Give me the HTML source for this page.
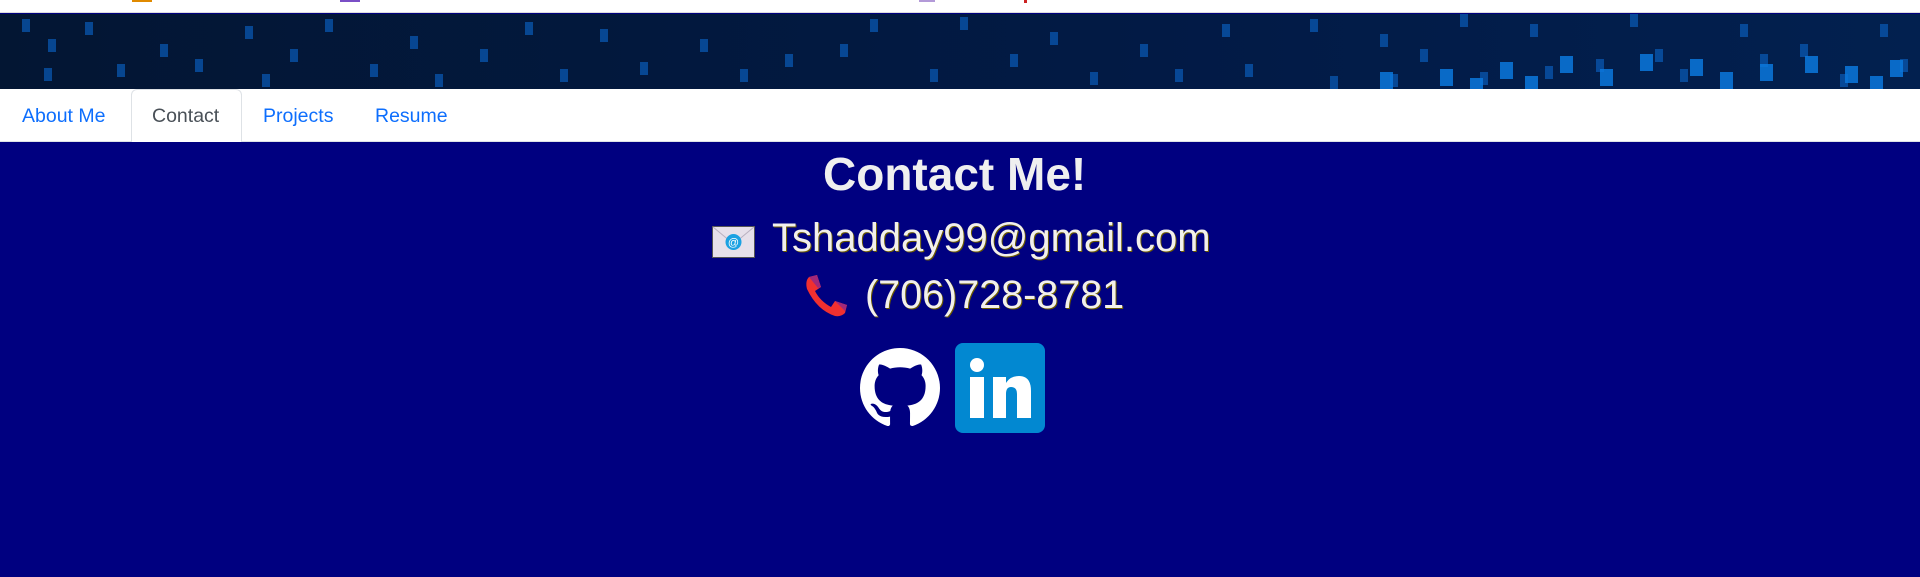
<!DOCTYPE html>
<html><head><meta charset="utf-8"><style>
*{margin:0;padding:0;box-sizing:border-box}
body{width:1920px;height:577px;overflow:hidden;background:#000080;font-family:"Liberation Sans",sans-serif;position:relative}
#top{position:absolute;left:0;top:0;width:1920px;height:13px;background:#fff;border-bottom:1px solid #ddd}
#banner{position:absolute;left:0;top:14px;width:1920px;height:75px;background:linear-gradient(90deg,#031633,#021a45 60%,#02204f);overflow:hidden}
#banner i{position:absolute;width:8px;height:13px;background:#0a5bb8;opacity:.7}
#banner i.b{background:#0b78dd;opacity:.85;width:13px;height:17px}
#nav{position:absolute;left:0;top:89px;width:1920px;height:53px;background:#fff;border-bottom:1px solid #dee2e6}
#nav a{position:absolute;top:16px;font-size:19.5px;color:#0d6efd;text-decoration:none}
#tab{position:absolute;left:131px;top:0;width:111px;height:53px;border:1px solid #dee2e6;border-bottom:none;border-radius:6px 6px 0 0;background:#fff}
.t{position:absolute;color:#f2f0ec;text-shadow:1px 1px 0 #6b5a00;white-space:nowrap}
</style></head><body>
<div id="top">
<span style="position:absolute;left:132px;top:0;width:20px;height:2px;background:#e08a00"></span>
<span style="position:absolute;left:340px;top:0;width:20px;height:2px;background:#7a4fc6"></span>
<span style="position:absolute;left:919px;top:0;width:16px;height:2px;background:#b39ad8"></span>
<span style="position:absolute;left:1024px;top:0;width:3px;height:3px;background:#c22"></span>
</div>
<div id="banner">
<i style="left:22px;top:5px"></i><i style="left:48px;top:25px"></i><i style="left:44px;top:54px"></i><i style="left:85px;top:8px"></i><i style="left:117px;top:50px"></i><i style="left:160px;top:30px"></i><i style="left:195px;top:45px"></i><i style="left:245px;top:12px"></i><i style="left:262px;top:60px"></i><i style="left:290px;top:35px"></i><i style="left:325px;top:5px"></i><i style="left:370px;top:50px"></i><i style="left:410px;top:22px"></i><i style="left:435px;top:60px"></i><i style="left:480px;top:35px"></i><i style="left:525px;top:8px"></i><i style="left:560px;top:55px"></i><i style="left:600px;top:15px"></i><i style="left:640px;top:48px"></i><i style="left:700px;top:25px"></i><i style="left:740px;top:55px"></i><i style="left:785px;top:40px"></i><i style="left:840px;top:30px"></i><i style="left:870px;top:5px"></i><i style="left:930px;top:55px"></i><i style="left:960px;top:3px"></i><i style="left:1010px;top:40px"></i><i style="left:1050px;top:18px"></i><i style="left:1090px;top:58px"></i><i style="left:1140px;top:30px"></i><i style="left:1175px;top:55px"></i><i style="left:1222px;top:10px"></i><i style="left:1245px;top:50px"></i><i style="left:1310px;top:5px"></i><i style="left:1330px;top:62px"></i><i style="left:1380px;top:20px"></i><i style="left:1390px;top:60px"></i><i style="left:1420px;top:35px"></i><i style="left:1460px;top:0"></i><i style="left:1480px;top:58px"></i><i style="left:1530px;top:10px"></i><i style="left:1545px;top:52px"></i><i style="left:1596px;top:45px"></i><i style="left:1630px;top:0"></i><i style="left:1655px;top:35px"></i><i style="left:1680px;top:55px"></i><i style="left:1740px;top:10px"></i><i style="left:1760px;top:40px"></i><i style="left:1800px;top:30px"></i><i style="left:1840px;top:60px"></i><i style="left:1880px;top:10px"></i><i style="left:1900px;top:45px"></i>
<i class="b" style="left:1380px;top:58px"></i><i class="b" style="left:1440px;top:55px"></i><i class="b" style="left:1500px;top:48px"></i><i class="b" style="left:1525px;top:62px"></i><i class="b" style="left:1560px;top:42px"></i><i class="b" style="left:1600px;top:55px"></i><i class="b" style="left:1640px;top:40px"></i><i class="b" style="left:1690px;top:45px"></i><i class="b" style="left:1720px;top:58px"></i><i class="b" style="left:1760px;top:50px"></i><i class="b" style="left:1805px;top:42px"></i><i class="b" style="left:1845px;top:52px"></i><i class="b" style="left:1890px;top:46px"></i><i class="b" style="left:1870px;top:62px"></i><i class="b" style="left:1470px;top:64px"></i>
</div>
<div id="nav">
<div id="tab"></div>
<a style="left:22px">About Me</a>
<a style="left:152px;color:#495057">Contact</a>
<a style="left:263px">Projects</a>
<a style="left:375px">Resume</a>
</div>
<div class="t" style="left:823px;top:147px;font-size:46px;font-weight:bold;text-shadow:none;color:#efefef">Contact Me!</div>
<svg style="position:absolute;left:712px;top:226px" width="43" height="32" viewBox="0 0 43 32"><rect x="0.5" y="0.5" width="42" height="31" fill="#e6e0ea" stroke="#555"/><path d="M1 1 L21.5 18 L42 1" fill="none" stroke="#b8b0c0"/><circle cx="21.5" cy="16" r="8" fill="#1ba1e2"/><text x="21.5" y="20" font-size="11" fill="#fff" text-anchor="middle" font-family="Liberation Sans">@</text></svg>
<div class="t" style="left:772px;top:216px;font-size:40px">Tshadday99@gmail.com</div>
<svg style="position:absolute;left:805px;top:275px" width="42" height="42" viewBox="0 0 42 42"><path d="M4 2 L12 0 L16 12 L10 16 Q15 26 26 32 L30 26 L42 30 L40 38 Q36 42 30 41 Q12 35 2 14 Q0 6 4 2Z" fill="#f03030"/><path d="M4 2 L12 0 L16 12 L13 13Z M30 26 L42 30 L40 36Z" fill="#a0287a"/></svg>
<div class="t" style="left:865px;top:273px;font-size:39.5px">(706)728-8781</div>
<svg style="position:absolute;left:860px;top:348px" width="80" height="80" viewBox="0 0 16 16"><path fill="#fff" d="M8 0C3.58 0 0 3.58 0 8c0 3.540 2.29 6.53 5.47 7.59.4.07.55-.17.55-.38 0-.19-.01-.82-.01-1.490-2.01.37-2.53-.49-2.69-.94-.09-.23-.48-.94-.82-1.13-.28-.15-.68-.52-.01-.53.63-.01 1.08.58 1.23.82.72 1.21 1.87.87 2.33.66.07-.52.28-.87.51-1.07-1.78-.2-3.64-.89-3.64-3.95 0-.87.31-1.59.82-2.15-.08-.2-.36-1.02.08-2.12 0 0 .67-.21 2.2.82.64-.18 1.32-.27 2-.27.68 0 1.36.09 2 .27 1.53-1.04 2.2-.82 2.2-.82.44 1.1.16 1.92.08 2.12.51.56.82 1.27.82 2.15 0 3.07-1.87 3.75-3.65 3.95.29.25.54.73.54 1.48 0 1.07-.01 1.93-.01 2.2 0 .21.15.46.55.38A8.013 8.013 0 0016 8c0-4.42-3.58-8-8-8z"/></svg>
<svg style="position:absolute;left:955px;top:343px" width="90" height="90" viewBox="0 0 90 90"><rect width="90" height="90" rx="8" fill="#0288d1"/><circle cx="22" cy="22" r="7" fill="#fff"/><rect x="15" y="34" width="14" height="41" fill="#fff"/><path d="M38 34 H51 V40 Q55 33 64 33 Q76 33 76 48 V75 H62 V51 Q62 44 56 44 Q51 44 51 51 V75 H38Z" fill="#fff"/></svg>
</body></html>
